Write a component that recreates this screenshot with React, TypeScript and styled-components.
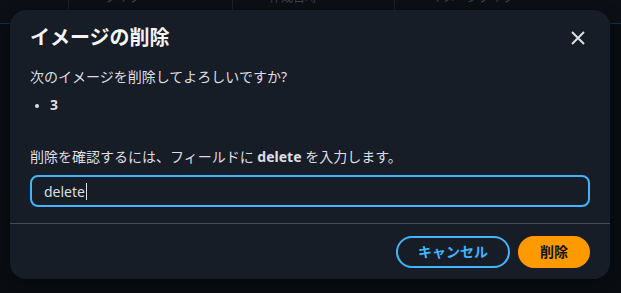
import React from "react";
import styled, { createGlobalStyle } from "styled-components";

const Global = createGlobalStyle`
  html, body { margin: 0; padding: 0; }
  body {
    width: 621px; height: 293px; overflow: hidden;
    background: #0b0e13;
    font-family: "Noto Sans", "Noto Sans CJK JP", sans-serif;
  }
  * { box-sizing: border-box; }
`;

const Page = styled.div`
  position: relative;
  width: 621px;
  height: 293px;
  background: #0f141a;
  overflow: hidden;
`;

const TableHeader = styled.div`
  display: grid;
  grid-template-columns: 68px 164px 162px 1fr;
  height: 24px;
  border-bottom: 1px solid #2a5f8f;
  background: #161b22;
`;

const HeaderCell = styled.div<{ $divider?: boolean }>`
  border-left: ${(p) => (p.$divider ? "1px solid #3a414b" : "none")};
  height: 10px;
  overflow: hidden;
  color: #7d8590;
  font-size: 12px;
  line-height: 12px;
  padding-left: 36px;
  & > span { display: block; margin-top: -8px; }
`;

const Overlay = styled.div`
  position: absolute;
  inset: 0;
  background: rgba(5, 8, 12, 0.55);
  padding: 10px 11px 14px 10px;
`;

const Modal = styled.div`
  width: 600px;
  height: 269px;
  background: #161d26;
  border-radius: 16px;
  display: flex;
  flex-direction: column;
  box-shadow: 0 2px 12px rgba(0, 0, 0, 0.5);
`;

const Header = styled.div`
  display: flex;
  align-items: center;
  justify-content: space-between;
  padding: 17px 22px 0 20px;
`;

const Title = styled.h2`
  margin: 0;
  font-size: 20px;
  line-height: 22px;
  font-weight: 700;
  color: #f4f4f4;
`;

const CloseButton = styled.button`
  background: none;
  border: none;
  padding: 0;
  width: 20px;
  height: 20px;
  display: flex;
  align-items: center;
  justify-content: center;
  color: #dedee3;
`;

const Body = styled.div`
  padding: 18px 20px 0 20px;
  display: flex;
  flex-direction: column;
`;

const Text = styled.p`
  margin: 0;
  font-size: 14px;
  line-height: 20px;
  color: #dedee3;
  & b { font-weight: 700; color: #dedee3; }
`;

const List = styled.ul`
  margin: 8px 0 32px 0;
  padding-left: 20px;
  font-size: 14px;
  line-height: 20px;
  color: #dedee3;
  font-weight: 700;
  & li::marker { font-size: 12px; }
`;

const Input = styled.div`
  margin-top: 8px;
  height: 32px;
  border: 2px solid #42b4ff;
  border-radius: 8px;
  padding: 0 12px;
  display: flex;
  align-items: center;
  font-size: 14px;
  color: #dedee3;
  background: #161d26;
`;

const Caret = styled.span`
  display: inline-block;
  width: 1px;
  height: 17px;
  background: #dedee3;
  margin-left: 1px;
`;

const Divider = styled.div`
  margin-top: 16px;
  height: 1px;
  background: #414d5c;
`;

const Footer = styled.div`
  display: flex;
  justify-content: flex-end;
  gap: 8px;
  padding: 12px 20px 0 20px;
`;

const Button = styled.button<{ $primary?: boolean }>`
  font-family: "Noto Sans", "Noto Sans CJK JP", sans-serif;
  height: 32px;
  padding: 0 20px;
  border-radius: 16px;
  font-size: 14px;
  font-weight: 700;
  line-height: 20px;
  border: 2px solid ${(p) => (p.$primary ? "#ff9900" : "#42b4ff")};
  background: ${(p) => (p.$primary ? "#ff9900" : "transparent")};
  color: ${(p) => (p.$primary ? "#0f141a" : "#42b4ff")};
`;

export default function App() {
  return (
    <>
      <Global />
      <Page>
        <TableHeader>
          <HeaderCell />
          <HeaderCell $divider><span>タイプ</span></HeaderCell>
          <HeaderCell $divider><span>作成日時</span></HeaderCell>
          <HeaderCell $divider><span>イメージタイプ</span></HeaderCell>
        </TableHeader>
        <Overlay>
          <Modal>
            <Header>
              <Title>イメージの削除</Title>
              <CloseButton aria-label="閉じる">
                <svg width="16" height="16" viewBox="0 0 16 16">
                  <path d="M2 2 L14 14 M14 2 L2 14" stroke="currentColor" strokeWidth="2" fill="none" />
                </svg>
              </CloseButton>
            </Header>
            <Body>
              <Text>次のイメージを削除してよろしいですか?</Text>
              <List>
                <li>3</li>
              </List>
              <Text>
                削除を確認するには、フィールドに <b>delete</b> を入力します。
              </Text>
              <Input>
                delete<Caret />
              </Input>
            </Body>
            <Divider />
            <Footer>
              <Button>キャンセル</Button>
              <Button $primary>削除</Button>
            </Footer>
          </Modal>
        </Overlay>
      </Page>
    </>
  );
}
